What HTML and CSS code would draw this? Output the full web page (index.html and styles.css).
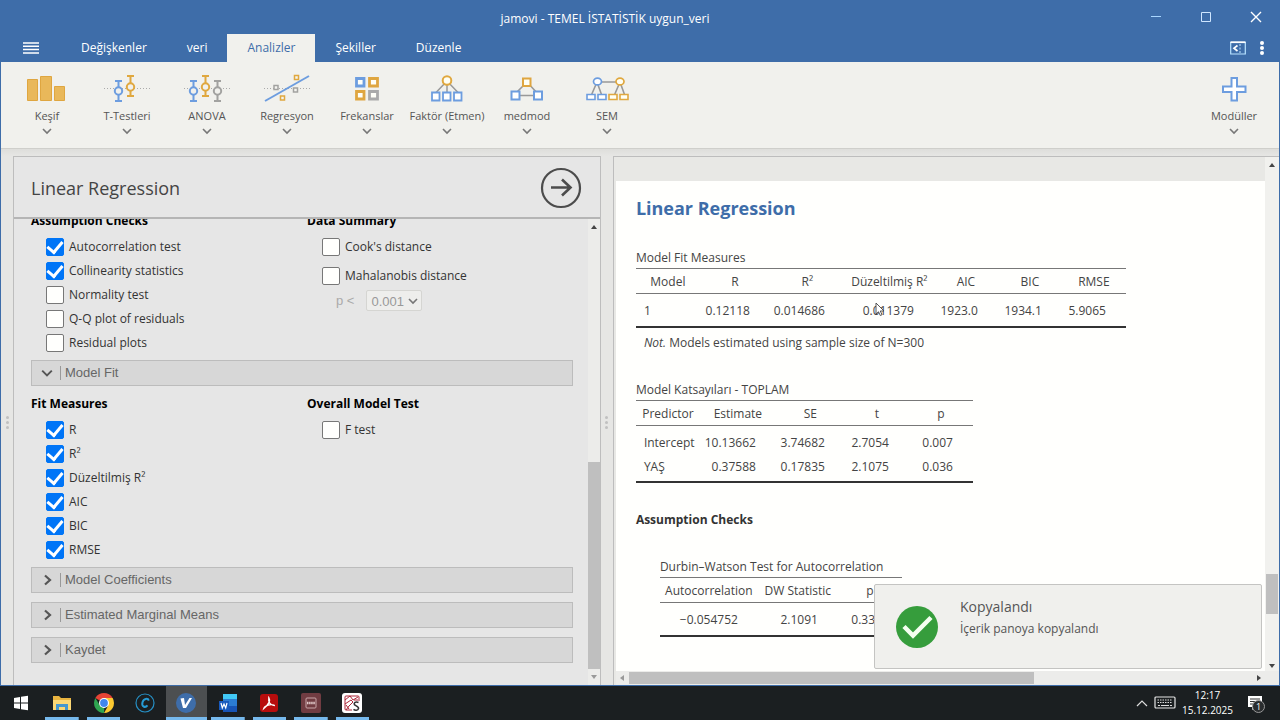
FILE: index.html
```html
<!DOCTYPE html>
<html lang="tr">
<head>
<meta charset="utf-8">
<title>jamovi - TEMEL İSTATİSTİK uygun_veri</title>
<link rel="stylesheet" href="styles.css">
</head>
<body>
<svg class="defs" aria-hidden="true">
  <symbol id="down" viewBox="0 0 10 8"><path d="M1 2l4 4 4-4" fill="none" stroke="currentColor" stroke-width="1.6"/></symbol>
  <symbol id="right" viewBox="0 0 10 12"><path d="M2 1.500l5 4.500-5 4.500" fill="none" stroke="currentColor" stroke-width="2.200"/></symbol>
</svg>
<div class="app">
  <header class="titlebar">
    <h1 class="window-title">jamovi - TEMEL İSTATİSTİK uygun_veri</h1>
    <div class="window-controls">
      <button aria-label="Minimize"><svg width="12" height="12" viewBox="0 0 12 12"><path d="M1 5.500h10" stroke="#a9d6ff"/></svg></button>
      <button aria-label="Maximize"><svg width="12" height="12" viewBox="0 0 12 12"><path d="M1.500 1.500h9v9h-9z" fill="none" stroke="#cfe6ff"/></svg></button>
      <button aria-label="Close"><svg width="12" height="12" viewBox="0 0 12 12"><path d="M1 1l10 10M11 1L1 11" stroke="#fff" stroke-width="1.400"/></svg></button>
    </div>
  </header>
  <nav class="tabs">
    <button class="menu" aria-label="Menu"><svg width="16" height="12" viewBox="0 0 16 12"><path d="M0 1h16M0 4.300h16M0 7.600h16M0 11h16" stroke="#fff" stroke-width="1.500"/></svg></button>
    <button class="tab">Değişkenler</button>
    <button class="tab">veri</button>
    <button class="tab active">Analizler</button>
    <button class="tab">Şekiller</button>
    <button class="tab">Düzenle</button>
    <div class="tab-tools">
      <button aria-label="Toggle panel"><svg width="16" height="14" viewBox="0 0 16 14"><path d="M.7 1.500h14.600v11.500H.7z" fill="none" stroke="#b9e3ff" stroke-width="1.200"/><path d="M.5 1.200h15" stroke="#fff" stroke-width="1.800"/><path d="M7.500 4.500L4 7.200l3.500 2.800" fill="none" stroke="#fff" stroke-width="1.700"/><path d="M10 3v10" stroke="#b9e3ff" stroke-dasharray="2 1.500"/></svg></button>
      <button aria-label="More"><svg width="6" height="16" viewBox="0 0 6 16"><g fill="#fff"><circle cx="3" cy="3" r="2"/><circle cx="3" cy="8" r="2"/><circle cx="3" cy="13" r="2"/></g></svg></button>
    </div>
  </nav>
  <div class="ribbon">
    <button class="tool"><svg class="ico" viewBox="0 0 48 32"><g fill="#e9b85a" stroke="#dfa640"><path d="M4.500 7.500h10v21h-10zM17.500 4.500h11v24h-11zM31.500 14.500h10v14h-10z"/></g></svg><span>Keşif</span><svg class="chev"><use href="#down"/></svg></button>
    <button class="tool"><svg class="ico" viewBox="0 0 48 32"><path d="M1 16.500h46" stroke="#aaa" stroke-dasharray="1 2"/><g fill="#f1f1ed" stroke-width="2"><path d="M12 9h7M15.500 9v20M12 29h7" stroke="#6d9ddf"/><circle cx="15.500" cy="19" r="3.700" stroke="#6d9ddf"/><path d="M24 4h7M27.500 4v20M24 24h7" stroke="#e0a83f"/><circle cx="27.500" cy="15" r="3.700" stroke="#e0a83f"/></g></svg><span>T-Testleri</span><svg class="chev"><use href="#down"/></svg></button>
    <button class="tool"><svg class="ico" viewBox="0 0 48 32"><path d="M1 16.500h46" stroke="#aaa" stroke-dasharray="1 2"/><g fill="#f1f1ed" stroke-width="2"><path d="M7 9h7M10.500 9v20M7 29h7" stroke="#6d9ddf"/><circle cx="10.500" cy="19" r="3.700" stroke="#6d9ddf"/><path d="M19 4h7M22.500 4v20M19 24h7" stroke="#e0a83f"/><circle cx="22.500" cy="15" r="3.700" stroke="#e0a83f"/><path d="M31 9h7M34.500 9v20M31 29h7" stroke="#a2a2a0"/><circle cx="34.500" cy="19" r="3.700" stroke="#a2a2a0"/></g></svg><span>ANOVA</span><svg class="chev"><use href="#down"/></svg></button>
    <button class="tool"><svg class="ico" viewBox="0 0 48 32"><path d="M1 16.500h46" stroke="#aaa" stroke-dasharray="1 2"/><path d="M2 29L46 4" stroke="#6d9ddf" stroke-width="2"/><g fill="#f4f4f0" stroke-width="1.500"><path d="M11 13.500h4v4h-4zM30.500 16h4v4h-4z" stroke="#a2a2a0"/><path d="M31.500 3.500h4v4h-4zM17.500 24h4v4h-4z" stroke="#e0a83f"/></g></svg><span>Regresyon</span><svg class="chev"><use href="#down"/></svg></button>
    <button class="tool"><svg class="ico" viewBox="0 0 48 32"><g fill="#fffff8" stroke-width="2.800"><path d="M13.500 6.500h7.500v7.500h-7.500z" stroke="#6d9ddf"/><path d="M26.500 6.500h8v7.500h-8zM13.500 19.500h7.500v7.500h-7.500z" stroke="#dfa640"/><path d="M26.500 19.500h8v7.500h-8z" stroke="#aaa"/></g></svg><span>Frekanslar</span><svg class="chev"><use href="#down"/></svg></button>
    <button class="tool"><svg class="ico" viewBox="0 0 48 32"><path d="M24 9L13 20.500M24 9v12M24 9l11 11.500" stroke="#999" stroke-width="1.500"/><circle cx="24" cy="8.500" r="4.300" fill="#fffff4" stroke="#e0a83f" stroke-width="2"/><path d="M9 20.500h7.500v8H9zM20 20.500h7.500v8H20zM31 20.500h7.500v8H31z" fill="#fff" stroke="#6d9ddf" stroke-width="1.800"/></svg><span>Faktör (Etmen)</span><svg class="chev"><use href="#down"/></svg></button>
    <button class="tool"><svg class="ico" viewBox="0 0 48 32"><path d="M24 10L12 22M24 10l11 12M13 23.500h22" stroke="#999" stroke-width="1.600"/><path d="M20 6.500h7.500v7.500H20z" fill="#fffff4" stroke="#dfa640" stroke-width="2"/><path d="M8.500 19.500h8v8h-8zM31 19.500h8v8h-8z" fill="#fff" stroke="#6d9ddf" stroke-width="2"/></svg><span>medmod</span><svg class="chev"><use href="#down"/></svg></button>
    <button class="tool"><svg class="ico" viewBox="0 0 48 32"><path d="M14 10h23M14 10L8 24M14 10l5 14M37 10l-6 14M37 10l5 14" stroke="#999" stroke-width="1.600"/><ellipse cx="14.500" cy="9.500" rx="4" ry="3.400" fill="#fff" stroke="#6d9ddf" stroke-width="1.700"/><ellipse cx="37" cy="9.500" rx="4" ry="3.400" fill="#fffff4" stroke="#e0a83f" stroke-width="1.700"/><path d="M4 22.500h8v5H4zM15 22.500h8v5h-8z" fill="#fff" stroke="#6d9ddf" stroke-width="1.600"/><path d="M26 22.500h8v5h-8zM37 22.500h8v5h-8z" fill="#fffff4" stroke="#e0a83f" stroke-width="1.600"/></svg><span>SEM</span><svg class="chev"><use href="#down"/></svg></button>
    <button class="tool modules"><svg class="ico" viewBox="0 0 48 32"><path d="M21.500 6h5.500v8.500h8.500V20H27v8.500h-5.500V20H13v-5.500h8.500z" fill="#fff" stroke="#6d9ddf" stroke-width="2"/></svg><span>Modüller</span><svg class="chev"><use href="#down"/></svg></button>
  </div>

  <main class="workspace">
    <div class="gutter"><i></i><i></i><i></i></div>
    <section class="options">
      <div class="options-head">
        <h2>Linear Regression</h2>
        <button aria-label="Hide options"><svg width="42" height="42" viewBox="0 0 42 42"><g fill="none" stroke="#4c4c4c"><circle cx="21" cy="21" r="19" stroke-width="2.200"/><path d="M11 20.500h19M22 12.500l8.500 8-8.500 8" stroke-width="2.600"/></g></svg></button>
      </div>
      <div class="options-body">
        <div class="options-scroll">
          <div class="cols first">
            <fieldset><legend>Assumption Checks</legend>
              <label><input type="checkbox" checked>Autocorrelation test</label>
              <label><input type="checkbox" checked>Collinearity statistics</label>
              <label><input type="checkbox">Normality test</label>
              <label><input type="checkbox">Q-Q plot of residuals</label>
              <label><input type="checkbox">Residual plots</label>
            </fieldset>
            <fieldset class="summary"><legend>Data Summary</legend>
              <label><input type="checkbox">Cook's distance</label>
              <label><input type="checkbox">Mahalanobis distance</label>
              <div class="p-row"><label for="pval">p &lt;</label><span class="select"><select id="pval" disabled><option>0.001</option></select><svg class="chev"><use href="#down"/></svg></span></div>
            </fieldset>
          </div>
          <button class="bar"><svg class="bar-down"><use href="#down"/></svg><span>Model Fit</span></button>
          <div class="cols">
            <fieldset><legend>Fit Measures</legend>
              <label><input type="checkbox" checked>R</label>
              <label><input type="checkbox" checked>R²</label>
              <label><input type="checkbox" checked>Düzeltilmiş R²</label>
              <label><input type="checkbox" checked>AIC</label>
              <label><input type="checkbox" checked>BIC</label>
              <label><input type="checkbox" checked>RMSE</label>
            </fieldset>
            <fieldset><legend>Overall Model Test</legend>
              <label><input type="checkbox">F test</label>
            </fieldset>
          </div>
          <div class="bars">
            <button class="bar"><svg class="bar-right"><use href="#right"/></svg><span>Model Coefficients</span></button>
            <button class="bar"><svg class="bar-right"><use href="#right"/></svg><span>Estimated Marginal Means</span></button>
            <button class="bar"><svg class="bar-right"><use href="#right"/></svg><span>Kaydet</span></button>
          </div>
        </div>
        <div class="vscroll"><b class="tri up"></b><div class="track"><div class="space-a"></div><div class="thumb"></div></div><b class="tri dn faint"></b></div>
      </div>
    </section>
    <div class="gutter"><i></i><i></i><i></i></div>
    <section class="results">
      <div class="results-row">
        <div class="page">
          <h2>Linear Regression</h2>
          <table class="fit">
            <caption>Model Fit Measures</caption>
            <colgroup><col class="w64"><col class="w70"><col class="w75"><col class="w89"><col class="w64"><col class="w64"><col class="w64"></colgroup>
            <thead><tr><th>Model</th><th>R</th><th>R²</th><th>Düzeltilmiş R²</th><th>AIC</th><th>BIC</th><th>RMSE</th></tr></thead>
            <tbody><tr><td class="l">1</td><td>0.12118</td><td>0.014686</td><td>0.011379</td><td>1923.0</td><td>1934.1</td><td>5.9065</td></tr></tbody>
          </table>
          <p class="note"><em>Not.</em> Models estimated using sample size of N=300</p>
          <table class="coef">
            <caption>Model Katsayıları - TOPLAM</caption>
            <colgroup><col class="w64"><col class="w76"><col class="w69"><col class="w64"><col class="w64"></colgroup>
            <thead><tr><th>Predictor</th><th>Estimate</th><th>SE</th><th>t</th><th>p</th></tr></thead>
            <tbody><tr><td class="l">Intercept</td><td>10.13662</td><td>3.74682</td><td>2.7054</td><td>0.007</td></tr>
            <tr><td class="l">YAŞ</td><td>0.37588</td><td>0.17835</td><td>2.1075</td><td>0.036</td></tr></tbody>
          </table>
          <h3>Assumption Checks</h3>
          <table class="dw">
            <caption>Durbin–Watson Test for Autocorrelation</caption>
            <colgroup><col class="w98"><col class="w80"><col class="w64"></colgroup>
            <thead><tr><th>Autocorrelation</th><th>DW Statistic</th><th>p</th></tr></thead>
            <tbody><tr><td>−0.054752</td><td>2.1091</td><td>0.332</td></tr></tbody>
          </table>
        </div>
        <div class="vscroll wide"><b class="tri up"></b><div class="track"><div class="space-b"></div><div class="thumb"></div><div class="space-c"></div></div><b class="tri dn"></b></div>
      </div>
      <div class="hscroll"><b class="tri lf faint"></b><div class="track"><div class="thumb"></div></div><b class="tri rt"></b></div>
      <div class="toast" role="status">
        <svg width="44" height="44" viewBox="0 0 44 44"><circle cx="22" cy="22" r="21" fill="#369d3c"/><path d="M9 21.500l9 9 18-18" fill="none" stroke="#f4fff0" stroke-width="4.500"/></svg>
        <div><strong>Kopyalandı</strong><span>İçerik panoya kopyalandı</span></div>
      </div>
      <svg class="pointer" viewBox="0 0 10 15"><path d="M1 1v11l2.500-2.200 1.800 3.700 1.700-.8L5.300 9H9z" fill="#fff" stroke="#444" stroke-width=".9"/></svg>
    </section>
  </main>
</div>
<footer class="taskbar">
  <div class="tasks">
  <button class="task plain" aria-label="Start"><svg width="20" height="20" viewBox="0 0 20 20"><path d="M3 5l6-1v5.500H3zM10 3.800l7-1.100v6.800h-7zM3 10.500h6V16l-6-1zM10 10.500h7v6.800l-7-1.100z" fill="#fff"/></svg></button>
  <button class="task" aria-label="Explorer"><svg width="20" height="20" viewBox="0 0 20 20"><path d="M1 3h6l2 2h10v12H1z" fill="#e9b440"/><path d="M1 7h18v10H1z" fill="#fbd775"/><path d="M4 17v-6h12v6h-3v-3H7v3z" fill="#4597cf"/></svg></button>
  <button class="task" aria-label="Chrome"><svg width="22" height="22" viewBox="0 0 22 22"><path d="M11 11L2.340 6A10 10 0 0 1 19.660 6z" fill="#e74435"/><path d="M11 6h8.660A10 10 0 0 1 11 21l4-7z" fill="#fbc930"/><path d="M2.340 6l5 8 4 1L11 21A10 10 0 0 1 2.340 6z" fill="#2fa651"/><circle cx="11" cy="11" r="5" fill="#fff"/><circle cx="11" cy="11" r="3.900" fill="#3f86ed"/></svg></button>
  <button class="task plain" aria-label="C"><svg width="20" height="20" viewBox="0 0 20 20"><circle cx="10" cy="10" r="9" fill="none" stroke="#268fc4" stroke-width="1.200"/><path d="M13.800 7.600C13 5 8.700 5.200 7.500 9.200c-1.200 4.400 2.700 6 5 3.200" fill="none" stroke="#269bd5" stroke-width="2"/></svg></button>
  <button class="task current" aria-label="jamovi"><svg width="20" height="20" viewBox="0 0 20 20"><circle cx="10" cy="10" r="10" fill="#3e6da9"/><path d="M4.500 5.500l3.500-.5 1 7 4.500-7H16l-6 10H7z" fill="#fff"/></svg></button>
  <button class="task" aria-label="Word"><svg width="20" height="20" viewBox="0 0 20 20"><rect x="5" y="1" width="14" height="18" rx="1" fill="#2b7cd3"/><path d="M5 1h14v5H5z" fill="#41c8f5"/><path d="M5 13h14v6H5z" fill="#1854b5"/><rect x="1" y="8" width="10" height="9" fill="#185abd"/><path d="M3 10l1.300 5L6 11l1.700 4L9 10" fill="none" stroke="#fff" stroke-width="1.200"/></svg></button>
  <button class="task" aria-label="Acrobat"><svg width="20" height="20" viewBox="0 0 20 20"><rect x="1" y="1" width="18" height="18" rx="3" fill="#b80d0d"/><path d="M9.800 4.500c2 3 1 6-5 11 1-3 7-5 11-3-4 0-7-3-6-8z" fill="none" stroke="#fff" stroke-width="1.300"/></svg></button>
  <button class="task" aria-label="App"><svg width="20" height="20" viewBox="0 0 20 20"><rect width="20" height="20" rx="2" fill="#713c42"/><rect x="5" y="5" width="10" height="10" rx="1" fill="none" stroke="#c9a5a8"/><path d="M6 10h8" stroke="#e0c8c9" stroke-dasharray="1.500 .6" stroke-width="2.500"/></svg></button>
  <button class="task" aria-label="SPSS"><svg width="20" height="20" viewBox="0 0 20 20"><rect width="20" height="20" rx="3" fill="#fff"/><g fill="none"><path d="M10 17H4q-1 0-1-1V4q0-1 1-1h12q1 0 1 1v4M3 7l5-4M3 11l6-4 2 2-4 4-3 4M8 3l3 4 5-3M4 12l3 4M12 7h4" stroke="#ad2638"/><path d="M16.500 9.500c-3-1.500-5 .5-4 2.300 1 1.200 4.500 1.500 4 3.800-.5 2-3.500 2-5 .8" stroke="#333" stroke-width="1.600"/></g></svg></button>
  </div>
  <div class="tray">
    <button aria-label="Hidden icons"><svg width="12" height="8" viewBox="0 0 12 8"><path d="M1 7l5-5 5 5" fill="none" stroke="#ddd" stroke-width="1.200"/></svg></button>
    <button aria-label="Keyboard"><svg width="22" height="14" viewBox="0 0 22 14"><rect x="1" y="1" width="20" height="11" rx="1" fill="none" stroke="#e5e5e5" stroke-width="1.200"/><path d="M3.500 4h15M3.500 6.500h15" stroke="#ddd" stroke-dasharray="1.500 1"/><path d="M4 9.500h2m1 0h8m1 0h2" stroke="#ddd"/></svg></button>
    <time><span>12:17</span><span>15.12.2025</span></time>
    <button class="notify" aria-label="Notifications"><svg width="16" height="16" viewBox="0 0 16 16"><path d="M1 1h14v11H8l-3 3v-3H1z" fill="#fff"/><path d="M3 4h10M3 6.500h10M3 9h7" stroke="#333"/></svg><span class="badge">1</span></button>
  </div>
</footer>
</body>
</html>
```
FILE: styles.css
```css
* { box-sizing: border-box; }
body {
  margin: 0;
  height: 100vh;
  display: flex;
  flex-direction: column;
  overflow: hidden;
  font: 12px/18px "Open Sans", "Noto Sans", sans-serif;
  color: #333;
  background: #1b1f21;
}
h1, h2, h3, p, fieldset, legend { margin: 0; padding: 0; border: 0; font-weight: 400; }
button { font: inherit; color: inherit; background: none; border: 0; padding: 0; }
svg { display: block; flex: none; }
.defs { position: absolute; width: 0; height: 0; }

.app {
  flex: 1;
  min-height: 0;
  display: flex;
  flex-direction: column;
  background: #3e6da9;
  border: solid #3e6da9;
  border-width: 0 1px 1px;
}
.titlebar { display: grid; grid-template-columns: 1fr auto 1fr; align-items: center; height: 34px; color: #fff; }
.window-title { grid-column: 2; font-size: 12px; padding-right: 70px; padding-top: 3px; }
.window-controls { justify-self: end; display: flex; gap: 38px; padding-right: 17px; }
.tabs { display: flex; height: 28px; color: #fff; font-size: 12px; padding-left: 18px; }
.menu { width: 24px; display: grid; place-items: center; margin-right: 18px; }
.tab { padding: 0 20px; }
.tab.active { background: #f1f1ed; color: #3e6da9; }
.tab-tools { margin-left: auto; display: flex; align-items: center; gap: 13px; padding-right: 14px; }

.ribbon {
  display: flex;
  height: 87px;
  background: #f1f1ed;
  border-bottom: 1px solid #cfcfcb;
  color: #555;
  padding-left: 6px;
}
.tool { width: 80px; display: flex; flex-direction: column; align-items: center; padding-top: 10px; white-space: nowrap; font-size: 11px; }
.tool span { line-height: 20px; margin-top: 2px; }
.modules { margin-left: auto; margin-right: 5px; }
.ico { width: 48px; height: 32px; }
.chev { width: 10px; height: 8px; color: #777; }
.tool .chev { margin-top: 1px; }

.workspace {
  flex: 1;
  min-height: 0;
  display: grid;
  grid-template-columns: 12px 46% 12px 1fr;
  padding-top: 7px;
  background: linear-gradient(#dededb, #e6e6e4 7px);
}
.gutter { display: flex; flex-direction: column; align-items: center; justify-content: center; gap: 2px; padding-top: 3px; }
.gutter i { width: 3px; height: 3px; border-radius: 50%; background: #c0c0c0; }
.options { display: flex; flex-direction: column; min-height: 0; background: #e6e6e6; border: solid #bdbdbd; border-width: 1px 1px 0; }
.options-head { display: flex; justify-content: space-between; align-items: center; height: 62px; padding: 1px 18px 0 17px; border-bottom: 2px solid #b5b5b5; }
.options-head h2 { font-size: 18px; line-height: 26px; color: #444; }
.options-body { flex: 1; min-height: 0; display: flex; overflow: hidden; }
.options-scroll { flex: 1; padding: 0 15px 0 17px; margin-top: -7px; }
.cols { display: grid; grid-template-columns: 276px 1fr; margin-top: 9px; padding-bottom: 5px; }
.cols.first { margin-top: 0; }
legend { font-weight: 700; color: #000; line-height: 18px; margin-bottom: 5px; }
fieldset { min-width: 0; }
fieldset > label { display: flex; align-items: center; gap: 5px; height: 24px; padding-left: 15px; }
.summary > label { margin-bottom: 5px; }
input {
  appearance: none;
  width: 18px;
  height: 18px;
  margin: 0;
  border: 1px solid #777;
  border-radius: 2px;
  background: #fffffd;
  display: grid;
  place-items: center;
}
input:checked { background: #0075f7; border-color: #0075f7; }
input:checked::before {
  content: "";
  width: 7px;
  height: 12px;
  border: solid #fff;
  border-width: 0 3px 3px 0;
  transform: translateY(-2px) rotate(40deg);
}
.p-row { display: flex; align-items: center; gap: 12px; padding-left: 29px; margin-top: -3px; color: #aaa; font: 13px/21px "Liberation Sans", Arial, sans-serif; }
.select { position: relative; display: flex; }
select { appearance: none; width: 56px; height: 21px; padding: 0 4px; border: 1px solid #d5d5d2; border-radius: 2px; background: #eeeeec; color: #999; font: inherit; opacity: 1; }
.select .chev { position: absolute; right: 4px; top: 7px; }
.bar {
  width: 100%;
  height: 26px;
  display: flex;
  align-items: center;
  background: #d7d7d7;
  border: 1px solid #bcbcbc;
  color: #666;
  font: 13px/14px "Liberation Sans", Arial, sans-serif;
}
.bar svg { width: 12px; height: 12px; margin: 0 7px 0 9px; color: #555; }
.bar .bar-right { margin: 0 6px 0 10px; }
.bar span { border-left: 1px solid #999; padding-left: 4px; }
.bars { display: grid; gap: 9px; }

.vscroll, .hscroll { display: flex; align-items: center; background: #ececea; }
.vscroll { flex-direction: column; width: 12px; padding: 6px 0; gap: 6px; }
.vscroll.wide { width: 14px; background: #f1f1ee; padding: 6px 0 3px; }
.track { flex: 1; display: flex; align-self: stretch; min-height: 0; }
.vscroll .track { flex-direction: column; }
.thumb { background: #bfbfbf; }
.space-a { flex: 230; }
.space-a + .thumb { flex: 210; }
.space-b { flex: 402; }
.space-b + .thumb { flex: 40; margin: 0 1px; }
.space-c { flex: 44; }
.tri { width: 0; height: 0; border: 3px solid transparent; }
.up { border-top: 0; border-bottom: 4px solid #444; }
.dn { border-bottom: 0; border-top: 4px solid #444; }
.lf { border-left: 0; border-right: 4px solid #444; }
.rt { border-right: 0; border-left: 4px solid #444; }
.dn.faint { border-top-color: #999; }
.lf.faint { border-right-color: #999; }
.hscroll { height: 14px; padding: 1px 18px 1px 4px; gap: 5px; }
.hscroll .thumb { width: 65%; }

.results { position: relative; min-width: 0; min-height: 0; display: flex; flex-direction: column; border: solid #bdbdbd; border-width: 1px 0 0 1px; padding-left: 2px; background: #e8e8e5; }
.results-row { flex: 1; min-height: 0; display: flex; overflow: hidden; }
.page { flex: 1; min-width: 0; margin-top: 24px; padding: 13px 20px 0; background: #fffffd; overflow: hidden; }
.page h2 { font-size: 18px; line-height: 28px; font-weight: 700; color: #3e6da9; margin-bottom: 27px; }
.page h3 { font-size: 12px; line-height: 18px; font-weight: 700; margin: 28px 0 29px; }
table { table-layout: fixed; border-collapse: separate; border-spacing: 0; color: #444; }
caption { text-align: left; line-height: 18px; padding-bottom: 1px; white-space: nowrap; color: #444; }
th { font-weight: 400; height: 26px; padding: 2px 0 0; border: solid #777; border-width: 1px 0; white-space: nowrap; }
td { height: 24px; padding: 2px 20px 0 0; text-align: right; white-space: nowrap; }
td.l { text-align: left; padding-right: 0; padding-left: 8px; }
tbody tr:first-child td { height: 28px; padding-top: 6px; }
tbody tr:last-child td { height: 29px; padding-bottom: 4px; border-bottom: 2px solid #333; }
tbody tr:only-child td { height: 34px; }
.fit { width: 490px; }
.coef { width: 337px; }
.dw { width: 242px; margin-left: 24px; }
.w64 { width: 64px; } .w69 { width: 69px; } .w70 { width: 70px; } .w75 { width: 75px; }
.w76 { width: 76px; } .w80 { width: 80px; } .w89 { width: 89px; } .w98 { width: 98px; }
.note { padding: 6px 8px 0; margin-bottom: 29px; color: #444; }
.toast {
  position: absolute;
  right: 17px;
  bottom: 16px;
  width: 388px;
  height: 85px;
  display: flex;
  gap: 21px;
  padding: 10px 20px;
  background: #f0f0ed;
  border: 1px solid #c4c4c2;
  border-radius: 2px;
  color: #555;
}
.toast svg { margin-top: 10px; }
.toast div { display: flex; flex-direction: column; gap: 2px; }
.toast strong { font-size: 14px; line-height: 23px; font-weight: 400; }
.pointer { position: absolute; left: 261px; top: 145px; width: 10px; height: 15px; }

.taskbar { height: 34px; display: flex; background: #1b1f21; color: #fff; }
.tasks { display: grid; grid-template-columns: repeat(9, 1fr); width: 373px; }
.task { display: grid; place-items: center; border: solid transparent; border-width: 0 4px; background: linear-gradient(#76b9ed, #76b9ed) bottom / 100% 3px no-repeat padding-box; }
.task.plain { background: none; }
.task.current { border-width: 0; background-color: #4c4f51; }
.tray { margin-left: auto; display: flex; align-items: center; gap: 6px; padding-right: 13px; }
time { display: flex; flex-direction: column; text-align: center; font-size: 10px; line-height: 15px; }
.notify { position: relative; width: 28px; height: 20px; padding-left: 8px; }
.badge { position: absolute; left: 13px; top: 7px; width: 13px; height: 13px; border: 1px solid #999; border-radius: 50%; background: #2a2d2f; font-size: 9px; line-height: 11px; }
```
